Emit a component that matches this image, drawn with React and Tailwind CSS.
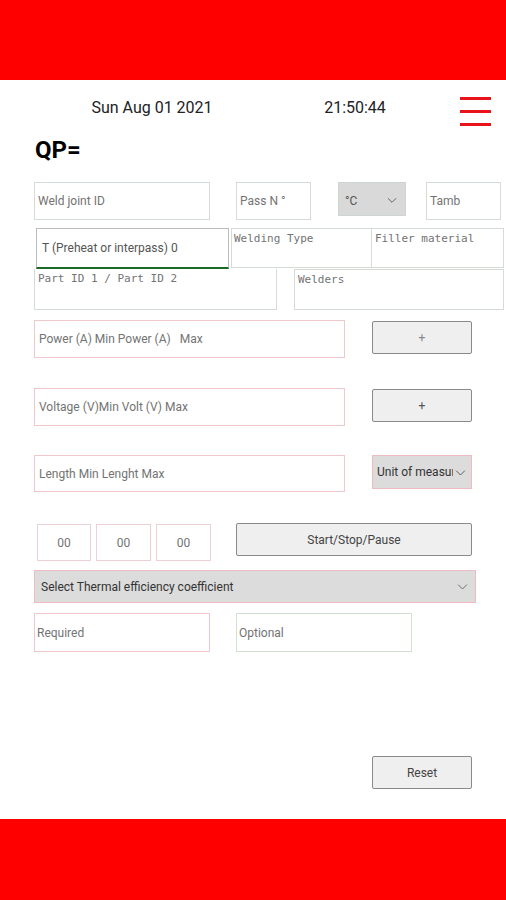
import React from 'react';

const ChevronDown = ({ className }) => (
  <svg viewBox="0 0 24 24" className={className} fill="none" stroke="currentColor" strokeWidth="1.5">
    <path d="M5 9l7 7 7-7" />
  </svg>
);

const Box = ({ className = '', children }) => (
  <div className={`flex items-center bg-white text-[12px] text-[#737373] ${className}`}>{children}</div>
);

const mono = { fontFamily: '"DejaVu Sans Mono", "Liberation Mono", monospace' };

const App = () => {
  return (
    <div className="w-[506px] h-[900px] flex flex-col bg-white overflow-hidden" style={{ fontFamily: 'Roboto, "Liberation Sans", sans-serif' }}>
      <div className="h-[80px] bg-[#ff0000] shrink-0" />

      <div className="flex-1 relative">
        {/* header */}
        <div className="flex items-center h-[56px]">
          <div className="w-[304px] text-center text-[16px] text-[#222]">Sun Aug 01 2021</div>
          <div className="w-[102px] text-center text-[16px] text-[#222]">21:50:44</div>
          <div className="ml-[54px] mt-[6px] flex flex-col gap-[10px]">
            <div className="w-[31px] h-[3px] bg-[#e8131b]" />
            <div className="w-[31px] h-[3px] bg-[#e8131b]" />
            <div className="w-[31px] h-[3px] bg-[#e8131b]" />
          </div>
        </div>
        <div className="pl-[35px] text-[24px] font-bold text-black leading-none mt-[2px]">QP=</div>

        {/* row 1 */}
        <div className="flex mt-[20px] h-[38px]">
          <Box className="ml-[34px] w-[176px] h-[38px] border border-[#d5dcd5] pl-[3px]">Weld joint ID</Box>
          <Box className="ml-[26px] w-[75px] h-[38px] border border-[#d5dcd5] pl-[3px]">Pass N °</Box>
          <div className="ml-[27px] w-[68px] h-[34px] bg-[#d9d9d9] border border-[#cfd6cf] flex items-start justify-between px-[6px] pt-[9px] text-[12px] text-[#555]">
            <span>°C</span>
            <ChevronDown className="w-[14px] h-[14px] text-[#555] mt-[1px]" />
          </div>
          <Box className="ml-[20px] w-[75px] h-[38px] border border-[#d5dcd5] pl-[3px]">Tamb</Box>
        </div>

        {/* row 2 */}
        <div className="flex mt-[8px] h-[41px]">
          <div className="ml-[36px] w-[193px] h-[41px] border border-[#bdbdbd] border-b-[2px] border-b-[#1d6b2a] flex items-center pl-[5px] text-[12px] text-[#555]">T (Preheat or interpass) 0</div>
          <div className="ml-[2px] w-[141px] h-[40px] border border-[#d5dcd5] pl-[2px] pt-[2px] text-[11px] text-[#737373]" style={mono}>Welding Type</div>
          <div className="w-[132px] h-[40px] border border-[#d5dcd5] border-l-0 pl-[3px] pt-[2px] text-[11px] text-[#737373]" style={mono}>Filler material</div>
        </div>

        {/* row 3 */}
        <div className="flex h-[41px]">
          <div className="ml-[34px] w-[243px] h-[41px] border border-[#d5dcd5] border-t-0 pl-[3px] pt-[2px] text-[11px] text-[#737373]" style={mono}>Part ID 1 / Part ID 2</div>
          <div className="ml-[17px] w-[210px] h-[41px] border border-[#d5dcd5] pl-[3px] pt-[2px] text-[11px] text-[#737373]" style={mono}>Welders</div>
        </div>

        {/* power */}
        <div className="flex mt-[10px] h-[38px]">
          <Box className="ml-[34px] w-[311px] h-[38px] border border-[#f0c8cc] pl-[4px]">Power (A) Min Power (A)&nbsp;&nbsp;&nbsp;Max</Box>
          <div className="ml-[27px] mt-[1px] w-[100px] h-[33px] bg-[#efefef] border-[1.5px] border-[#8a8a8a] rounded-[2px] flex items-center justify-center text-[12px] text-[#888]">+</div>
        </div>

        {/* voltage */}
        <div className="flex mt-[30px] h-[38px]">
          <Box className="ml-[34px] w-[311px] h-[38px] border border-[#f0c8cc] pl-[4px]">Voltage (V)Min Volt (V) Max</Box>
          <div className="ml-[27px] mt-[1px] w-[100px] h-[33px] bg-[#efefef] border-[1.5px] border-[#8a8a8a] rounded-[2px] flex items-center justify-center text-[12px] text-[#555]">+</div>
        </div>

        {/* length */}
        <div className="flex mt-[29px] h-[37px]">
          <Box className="ml-[34px] w-[311px] h-[37px] border border-[#f0c8cc] pl-[4px]">Length Min Lenght Max</Box>
          <div className="ml-[27px] w-[100px] h-[34px] bg-[#dcdcdc] border border-[#efbcc2] flex items-center justify-between pl-[4px] pr-[3px] text-[12px] text-[#333] whitespace-nowrap">
            <span className="overflow-hidden w-[76px]">Unit of measure</span>
            <ChevronDown className="w-[15px] h-[15px] text-[#555] shrink-0" />
          </div>
        </div>

        {/* timer */}
        <div className="flex mt-[32px] h-[37px]">
          <Box className="ml-[37px] w-[54px] h-[37px] border border-[#ecd0d3] justify-center text-[#555]">00</Box>
          <Box className="ml-[5px] w-[55px] h-[37px] border border-[#ecd0d3] justify-center text-[#555]">00</Box>
          <Box className="ml-[5px] w-[55px] h-[37px] border border-[#ecd0d3] justify-center text-[#555]">00</Box>
          <div className="ml-[25px] -mt-[1px] w-[236px] h-[33px] bg-[#efefef] border-[1.5px] border-[#8a8a8a] rounded-[2px] flex items-center justify-center text-[12px] text-[#444]">Start/Stop/Pause</div>
        </div>

        {/* thermal */}
        <div className="ml-[34px] mt-[9px] w-[442px] h-[33px] bg-[#dcdcdc] border border-[#efbcc2] flex items-center justify-between pl-[6px] pr-[5px] text-[12px] text-[#333]">
          <span>Select Thermal efficiency coefficient</span>
          <ChevronDown className="w-[15px] h-[15px] text-[#666]" />
        </div>

        {/* required / optional */}
        <div className="flex mt-[10px] h-[39px]">
          <Box className="ml-[34px] w-[176px] h-[39px] border border-[#efc8cc] pl-[2px]">Required</Box>
          <Box className="ml-[26px] w-[176px] h-[39px] border border-[#cfe0cf] pl-[2px]">Optional</Box>
        </div>

        {/* reset */}
        <div className="flex mt-[104px]">
          <div className="ml-[372px] w-[100px] h-[33px] bg-[#efefef] border-[1.5px] border-[#8a8a8a] rounded-[2px] flex items-center justify-center text-[12px] text-[#444]">Reset</div>
        </div>
      </div>

      <div className="h-[81px] bg-[#ff0000] shrink-0" />
    </div>
  );
};

export default App;
